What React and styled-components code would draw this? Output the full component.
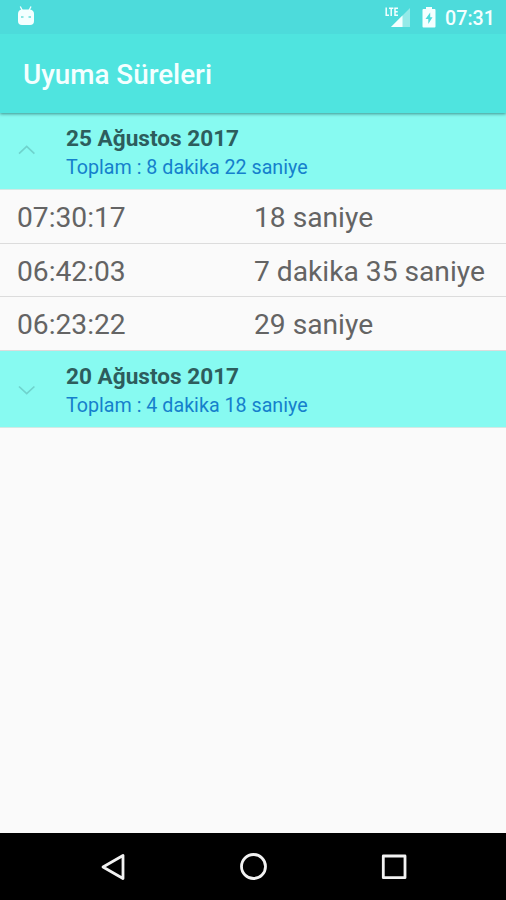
import React from "react";
import styled, { createGlobalStyle } from "styled-components";

const GlobalStyle = createGlobalStyle`
  * { box-sizing: border-box; }
  body { margin: 0; background: #fafafa; font-family: Roboto, "Liberation Sans", sans-serif; }
`;

const Screen = styled.div`
  width: 506px;
  height: 900px;
  display: flex;
  flex-direction: column;
  background: #fafafa;
  overflow: hidden;
`;

const StatusBar = styled.header`
  height: 34px;
  flex: none;
  z-index: 2;
  display: flex;
  align-items: flex-start;
  background: #4ddbdb;
  color: #f4ffff;
  padding: 0 11px 0 17px;
`;

const StatusIcon = styled.svg`
  display: block;
  flex: none;
  margin-top: ${(p) => p.$top}px;
  margin-left: ${(p) => p.$left || 0}px;
`;

const Spacer = styled.div`
  flex: 1;
`;

const Clock = styled.span`
  width: 50px;
  margin-left: 9px;
  font-size: 19.7px;
  font-weight: 500;
  line-height: 37px;
  white-space: nowrap;
`;

const Toolbar = styled.div`
  height: 79px;
  flex: none;
  z-index: 1;
  display: flex;
  align-items: center;
  padding: 3px 23px 0;
  background: #4fe4df;
  box-shadow: 0 1px 3px rgba(0, 60, 60, 0.55);
`;

const Title = styled.h1`
  margin: 0;
  color: #f4ffff;
  font-size: 27.8px;
  font-weight: 500;
  line-height: 34px;
`;

const GroupHeader = styled.div`
  height: 77px;
  flex: none;
  display: flex;
  align-items: flex-start;
  padding: 12px 0 0 18px;
  background: #87faf1;
  border-bottom: 1px solid #d3e9e5;
`;

const Chevron = styled.svg`
  display: block;
  flex: none;
  width: 18px;
  height: 16px;
  margin: 18px 30px 0 0;
`;

const GroupText = styled.div`
  display: flex;
  flex-direction: column;
`;

const GroupDate = styled.strong`
  color: #2d5d5d;
  font-size: 22.6px;
  font-weight: 700;
  line-height: 28px;
  white-space: nowrap;
`;

const GroupTotal = styled.span`
  color: #1580cc;
  font-size: 19.7px;
  line-height: 29px;
  white-space: nowrap;
`;

const Row = styled.div`
  height: ${(p) => p.$height}px;
  flex: none;
  display: grid;
  grid-template-columns: 237px 1fr;
  align-items: center;
  padding: 1px 0 0 17px;
  border-bottom: 1px solid #dcdcdc;
  color: #646464;
  font-size: 28.2px;
  line-height: 53px;
  white-space: nowrap;
`;

const NavBar = styled.nav`
  height: 67px;
  flex: none;
  display: flex;
  align-items: center;
  justify-content: space-between;
  padding: 0 98px 0 99px;
  background: #000;
`;

const NavIcon = styled.svg`
  display: block;
  width: 28px;
  height: 28px;
`;

const groups = [
  {
    date: "25 Ağustos 2017",
    total: "Toplam : 8 dakika 22 saniye",
    open: true,
    rows: [
      { time: "07:30:17", length: "18 saniye", height: 54 },
      { time: "06:42:03", length: "7 dakika 35 saniye", height: 53 },
      { time: "06:23:22", length: "29 saniye", height: 54 },
    ],
  },
  {
    date: "20 Ağustos 2017",
    total: "Toplam : 4 dakika 18 saniye",
    open: false,
    rows: [],
  },
];

function Group({ group }) {
  return (
    <>
      <GroupHeader>
        <Chevron viewBox="0 0 18 16" fill="none" stroke="#6fd3cd" strokeWidth="1.7">
          <path d={group.open ? "M1 10.7 8.7 3.5 16.4 10.7" : "M1 5.5 8.7 12.7 16.4 5.5"} />
        </Chevron>
        <GroupText>
          <GroupDate>{group.date}</GroupDate>
          <GroupTotal>{group.total}</GroupTotal>
        </GroupText>
      </GroupHeader>
      {group.rows.map((row) => (
        <Row key={row.time} $height={row.height}>
          <span>{row.time}</span>
          <span>{row.length}</span>
        </Row>
      ))}
    </>
  );
}

export default function App() {
  return (
    <Screen>
      <GlobalStyle />
      <StatusBar>
        <StatusIcon $top={6} width="18" height="20" viewBox="0 0 18 20">
          <path d="M3.3 0.5 5.3 4.5M14 0.5 12 4.5" stroke="#f4ffff" strokeWidth="1.3" />
          <path
            d="M4.5 3.5H13Q17 4 17 8V15Q17 19 13 19H5Q1 19 1 15V8Q1 4 4.5 3.5Z"
            fill="#f4ffff"
          />
          <path d="M4 11H6.5M11.5 11H14" stroke="#6bdedb" strokeWidth="1.5" />
        </StatusIcon>
        <Spacer />
        <StatusIcon $top={6} width="26" height="22" viewBox="0 0 26 22">
          <path d="M25 2V21H6Z" fill="#94eae8" />
          <path d="M17.5 9.5V21H6Z" fill="#f4ffff" />
          <path d="M0 0H13.5V11H0Z" fill="#4ddbdb" />
          <path
            d="M1.2 1.5V9.2H4M4 2.2H8.4M6.2 2.2V10M13 2.2H10V9.2H13M10 5.7H12.7"
            fill="none"
            stroke="#f4ffff"
            strokeWidth="1.5"
          />
        </StatusIcon>
        <StatusIcon $top={7} $left={11} width="14" height="21" viewBox="0 0 14 21">
          <path
            d="M4 0H10V2H12.5Q13.5 2 13.5 3V19.5Q13.5 20.5 12.5 20.5H1.5Q.5 20.5 .5 19.5V3Q.5 2 1.5 2H4Z"
            fill="#f4ffff"
          />
          <path d="M8.2 5.5 3.5 12H6.3V17L10.5 10.3H8.2Z" fill="#4ddbdb" />
        </StatusIcon>
        <Clock>07:31</Clock>
      </StatusBar>
      <Toolbar>
        <Title>Uyuma Süreleri</Title>
      </Toolbar>
      {groups.map((group) => (
        <Group key={group.date} group={group} />
      ))}
      <Spacer />
      <NavBar>
        <NavIcon viewBox="0 0 28 28" fill="none" stroke="#f2f2f2" strokeWidth="2.8" strokeLinejoin="round">
          <path d="M24 2.5V25.5L4 14Z" />
        </NavIcon>
        <NavIcon viewBox="0 0 28 28" fill="none" stroke="#f2f2f2" strokeWidth="2.8">
          <circle cx="13.5" cy="13.5" r="12" />
        </NavIcon>
        <NavIcon viewBox="0 0 28 28" fill="none" stroke="#f2f2f2" strokeWidth="2.8" strokeLinejoin="round">
          <rect x="3.3" y="3" width="21.7" height="21.7" />
        </NavIcon>
      </NavBar>
    </Screen>
  );
}
